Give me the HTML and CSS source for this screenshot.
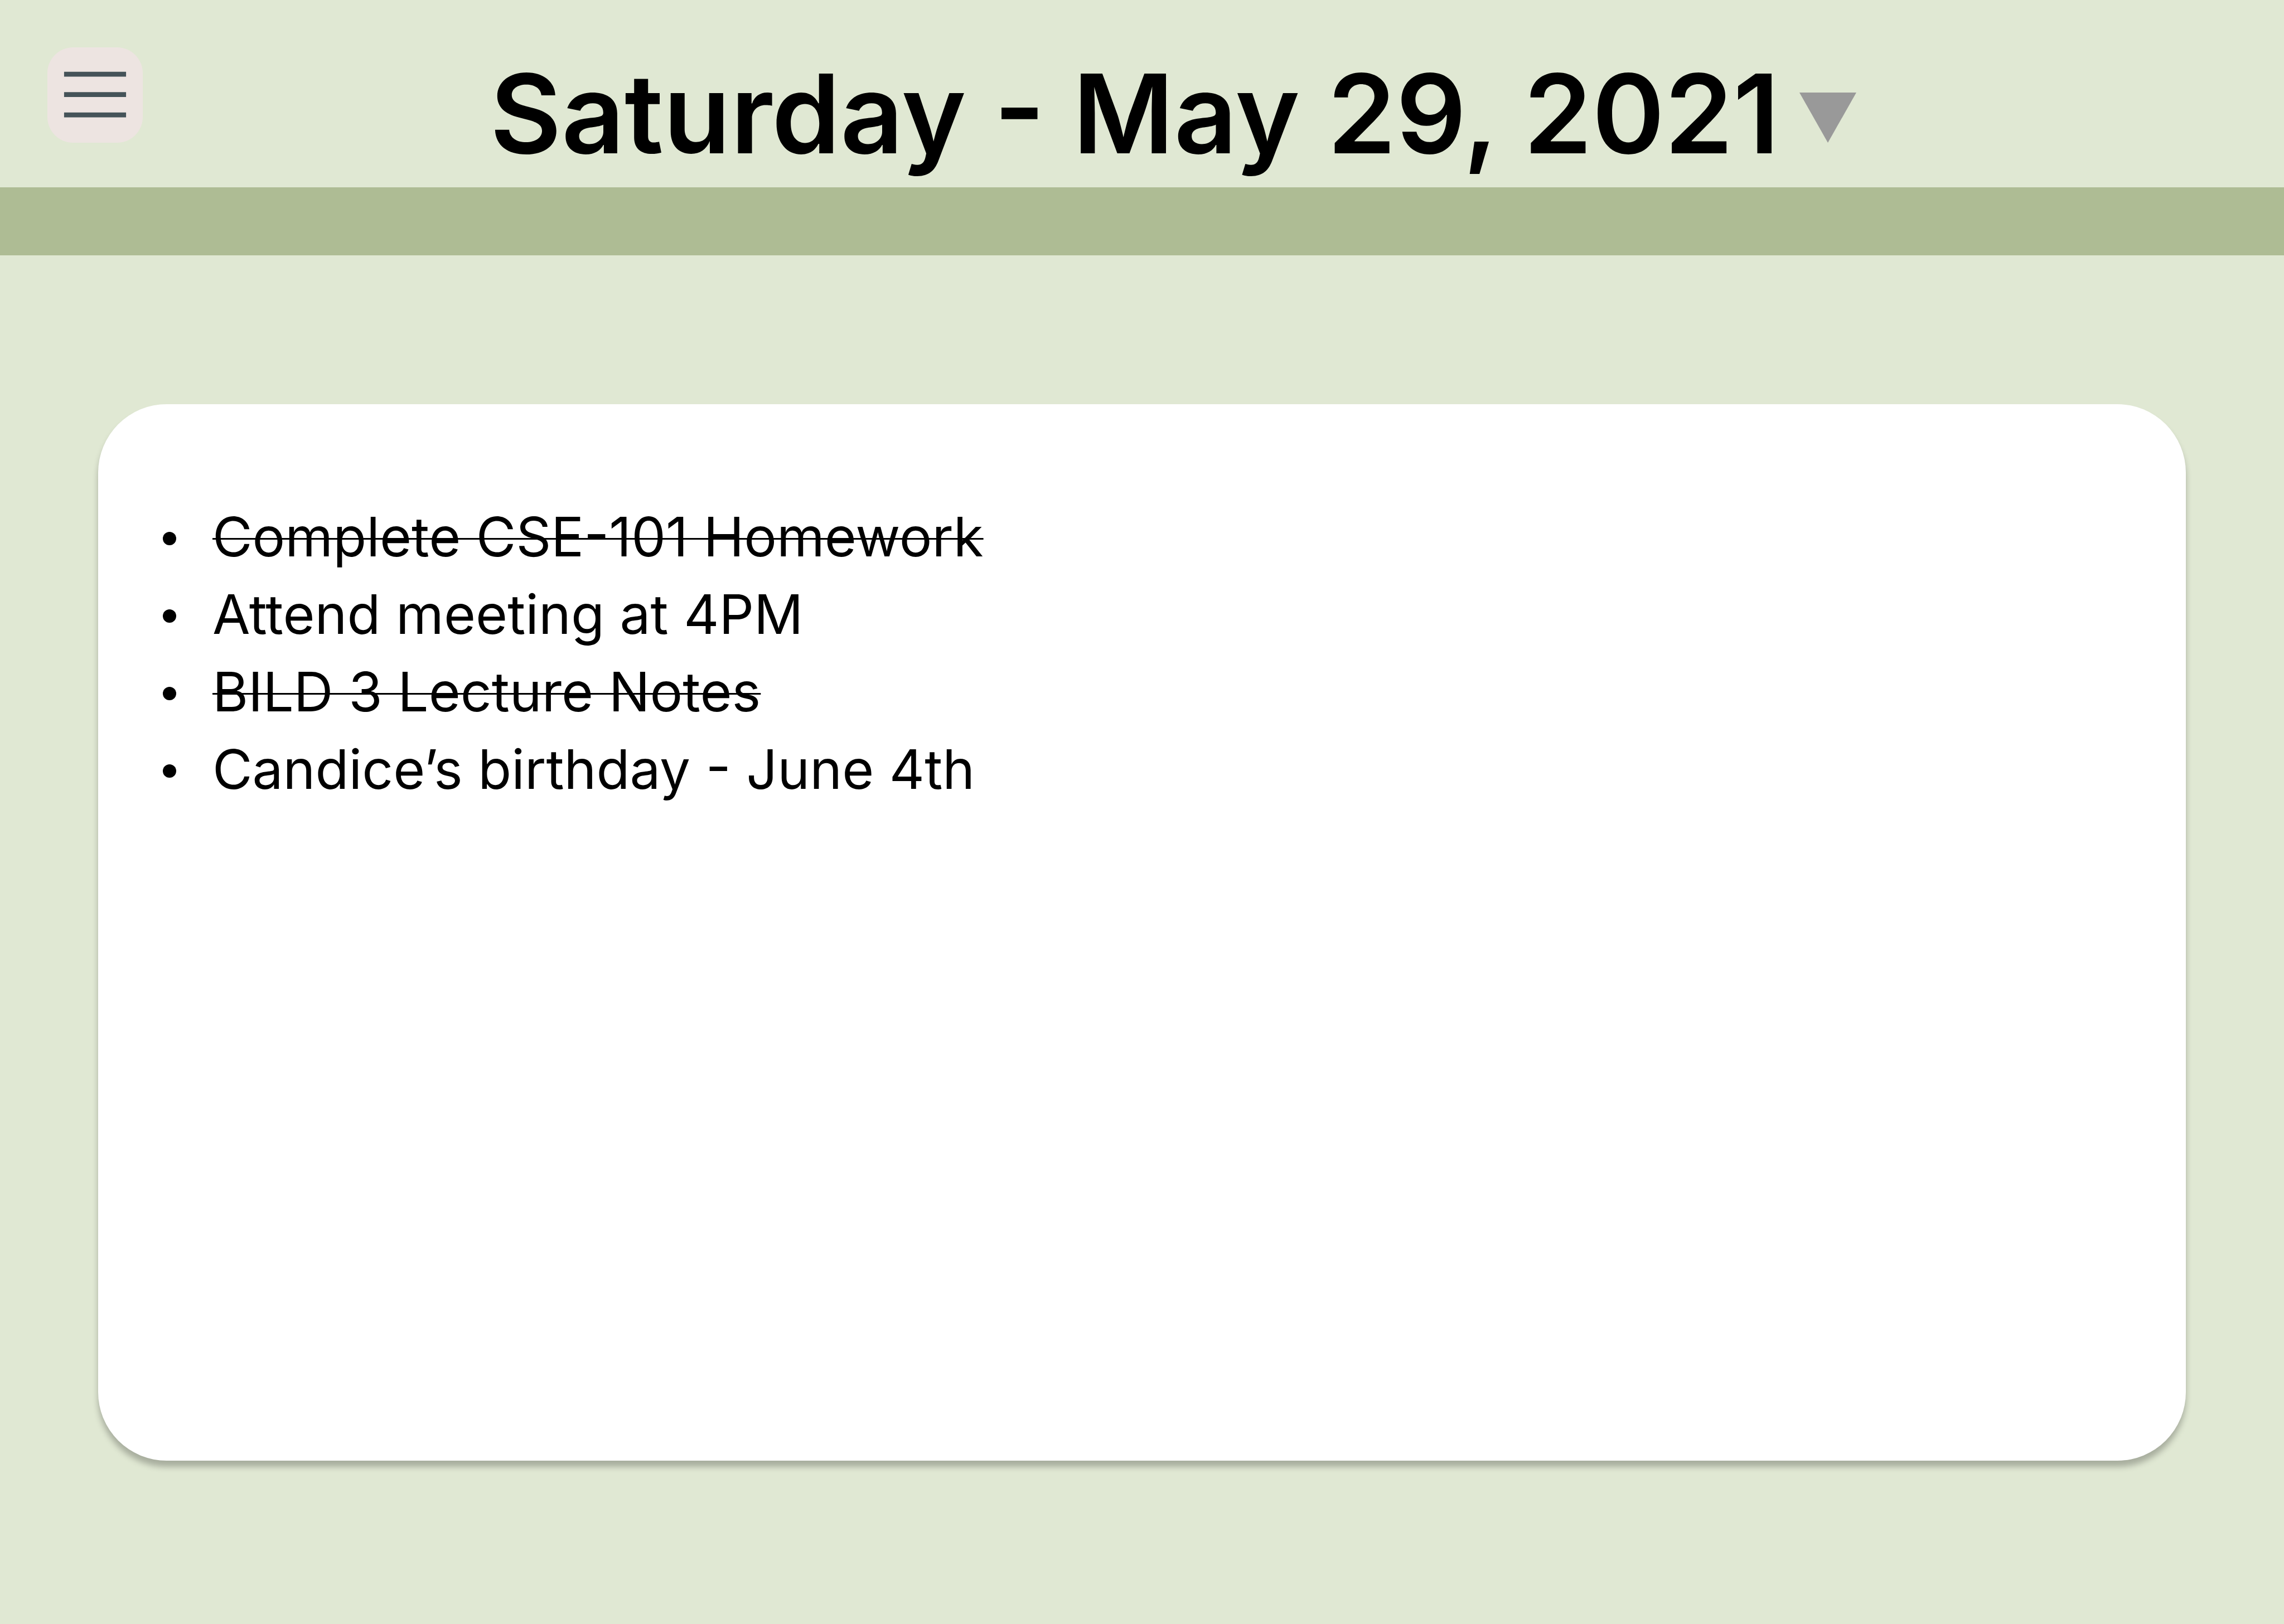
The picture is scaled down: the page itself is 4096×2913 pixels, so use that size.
FILE: index.html
```
<!DOCTYPE html>
<html lang="en">
<head>
  <meta charset="utf-8">
  <meta name="viewport" content="width=device-width, initial-scale=1">
  <title>Saturday - May 29, 2021</title>
  <link rel="stylesheet" href="styles.css">
</head>
<body class="page">
  <header class="header">
    <button class="menu-button" type="button" aria-label="Menu">
      <svg class="menu-icon" viewBox="0 0 180 180" aria-hidden="true">
        <path d="M31.5 50.7H148.5M31.5 89.2H148.5M31.5 127.5H148.5" fill="none" stroke="#455358" stroke-width="9.2"/>
      </svg>
    </button>
    <h1 class="title">Saturday - May 29, 2021</h1>
    <button class="date-button" type="button" aria-label="Choose date">
      <svg class="date-icon" viewBox="0 0 102 90" aria-hidden="true">
        <path d="M0 0H102L51 90Z" fill="#999999"/>
      </svg>
    </button>
  </header>
  <div class="band"></div>
  <main class="content">
    <section class="card">
      <ul class="tasks">
        <li class="task"><s class="done">Complete CSE-101 Homework</s></li>
        <li class="task">Attend meeting at 4PM</li>
        <li class="task"><s class="done">BILD 3 Lecture Notes</s></li>
        <li class="task">Candice’s birthday - June 4th</li>
      </ul>
    </section>
  </main>
</body>
</html>
```
FILE: styles.css
```
*,
*::before {
  box-sizing: border-box;
}

.page {
  margin: 0;
  min-height: 100vh;
  display: flex;
  flex-direction: column;
  background: #e0e8d3;
  color: #000;
  font-family: Inter, "Liberation Sans", sans-serif;
}

.header {
  display: grid;
  grid-template-columns: 1fr auto 1fr;
  align-items: start;
  padding: 85px 111px 13px 85px;
}

.menu-button,
.date-button {
  border: 0;
  padding: 0;
  cursor: pointer;
}

.menu-button {
  width: 171px;
  height: 171px;
  border-radius: 46px;
  background: #ede4e1;
}

.menu-icon,
.date-icon {
  display: block;
  width: 100%;
}

.title {
  margin: 0;
  font-size: 197px;
  font-weight: 600;
  line-height: 238px;
  white-space: nowrap;
}

.date-button {
  width: 102px;
  margin: 81px 0 0 36px;
  background: none;
}

.band {
  height: 122px;
  background: #aebc94;
}

.content {
  flex: 1;
  display: flex;
  padding: 267px 176px 293px;
}

.card {
  flex: 1;
  padding: 168px 116px;
  border-radius: 123px;
  background: #fff;
  box-shadow: 0 11px 11px rgba(0, 0, 0, 0.25);
}

.tasks {
  margin: 0;
  padding: 0;
  list-style: none;
  font-size: 98px;
  font-weight: 400;
  line-height: 139px;
}

.task::before {
  content: "";
  display: inline-block;
  width: 24px;
  height: 24px;
  margin-right: 65px;
  border-radius: 50%;
  background: #000;
  vertical-align: 20px;
}

.done {
  text-decoration-thickness: 3px;
}
```
